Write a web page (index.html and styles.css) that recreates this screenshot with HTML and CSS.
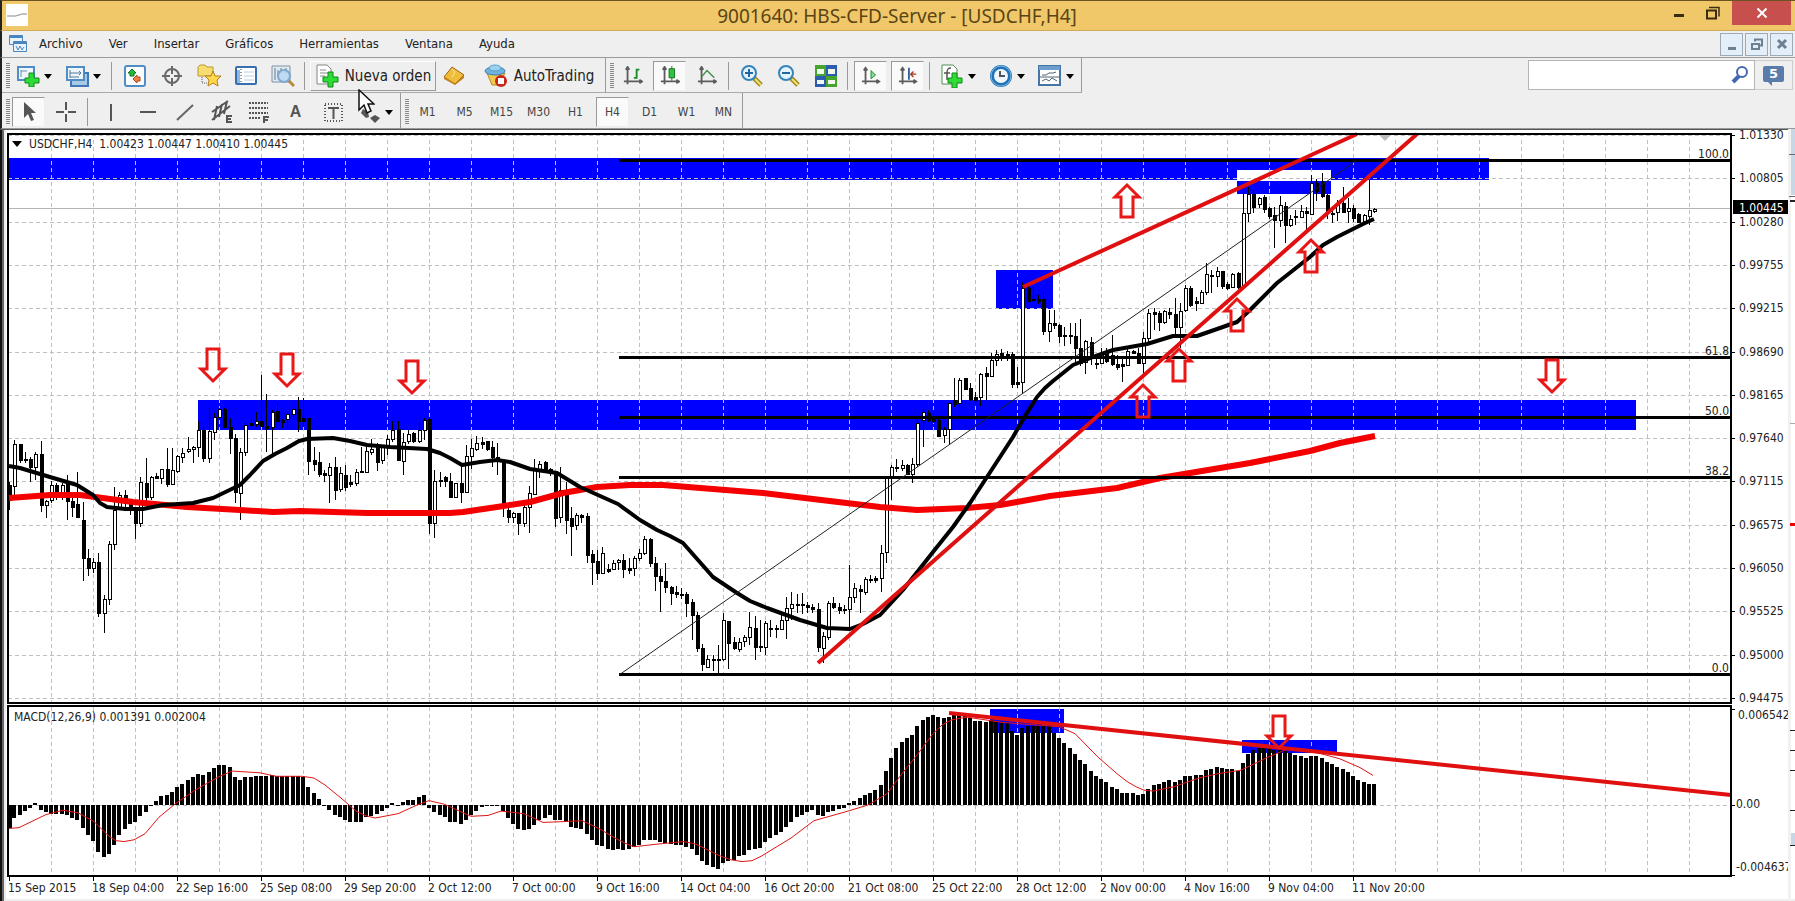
FILE: index.html
```html
<!DOCTYPE html>
<html lang="es">
<head>
<meta charset="utf-8">
<title>9001640: HBS-CFD-Server - [USDCHF,H4]</title>
<link rel="stylesheet" href="styles.css">
</head>
<body>
<header class="titlebar">
  <span class="app-icon"><svg width="22" height="22" viewBox="0 0 22 22"><path d="M1 12h9l2-1 2 0 1-1h6" fill="none" stroke="#888"/></svg></span>
  <h1 class="title">9001640: HBS-CFD-Server - [USDCHF,H4]</h1>
  <div class="window-controls">
    <button class="win-btn" aria-label="Minimizar"><svg width="12" height="14"><path d="M1 8h10v3H1z" fill="#3a2d10"/></svg></button>
    <button class="win-btn" aria-label="Restaurar"><svg width="14" height="14" fill="none" stroke="#3a2d10"><path d="M1 4.5h9v8H1z" stroke-width="2"/><path d="M3 1.5h10v9" stroke-width="1.5"/></svg></button>
    <button class="win-btn close" aria-label="Cerrar"><svg width="12" height="12" stroke="#fff" stroke-width="2"><path d="M1.500 1.500l9 9M10.500 1.500l-9 9"/></svg></button>
  </div>
</header>
<nav class="menubar">
  <svg class="menu-icon" width="20" height="20" viewBox="0 0 20 20" fill="#eaf3fc" stroke="#4a86c0"><path d="M1.500 1.500h13v9h-13z"/><path d="M1.500 3h13" stroke-width="2"/><path d="M5.500 7.500h13v10h-13z"/><path d="M5.500 9h13" stroke-width="2"/><path d="M8 12l2 4 2-4 2 4 2-3" fill="none"/></svg>
  <button class="menu">Archivo</button>
  <button class="menu">Ver</button>
  <button class="menu">Insertar</button>
  <button class="menu">Gráficos</button>
  <button class="menu">Herramientas</button>
  <button class="menu">Ventana</button>
  <button class="menu">Ayuda</button>
  <div class="mdi">
    <button class="mdi-btn" aria-label="Minimizar gráfico"><svg width="16" height="16"><path d="M4 11h8v3H4z" fill="#6c8092"/></svg></button>
    <button class="mdi-btn" aria-label="Restaurar gráfico"><svg width="16" height="16" fill="none" stroke="#6c8092"><path d="M3 8h7v5H3z" stroke-width="2"/><path d="M6 5.500V3.500h7v6h-2" stroke-width="2"/></svg></button>
    <button class="mdi-btn" aria-label="Cerrar gráfico"><svg width="16" height="16" stroke="#6c8092" stroke-width="3"><path d="M4 4l8 8M12 4l-8 8"/></svg></button>
  </div>
</nav>
<div class="bar">
  <div class="tools">
    <span class="grip"></span>
    <button class="tool drop" aria-label="Nuevo gráfico"><svg width="24" height="22" viewBox="0 0 24 22"><path d="M2 2h16v13H2z" fill="#eef6fd" stroke="#4f8dc4" stroke-width="2"/><path d="M5 5v7M5 6h6" stroke="#6c8da8"/><path d="M13 8h5v5h5v5h-5v4h-5v-4H9v-5h4z" fill="#2ddd35" stroke="#12871a"/></svg></button>
    <button class="tool drop" aria-label="Perfiles"><svg width="24" height="22" viewBox="0 0 24 22"><path d="M6 8h17v13H6z" fill="#a8caea" stroke="#3f78b5" stroke-width="2"/><path d="M2 2h17v13H2z" fill="#eef6fd" stroke="#4f8dc4" stroke-width="2"/><path d="M5 5v8M5 8h11M14 6l2 2-2 2M5 12h9" fill="none" stroke="#55799a"/></svg></button>
    <span class="sep"></span>
    <button class="tool" aria-label="Observación de mercado"><svg width="22" height="22" viewBox="0 0 22 22"><rect x="1" y="1" width="20" height="20" rx="2" fill="#fbfdff" stroke="#4f8dc4" stroke-width="2"/><path d="M8 4l4 4h-2v3H6V8H4z" fill="#1fc138" stroke="#11711f"/><path d="M13 18l-4-4 4-4v2h3v4h-3z" fill="#f08045" stroke="#b0461b"/></svg></button>
    <button class="tool" aria-label="Ventana de datos"><svg width="22" height="22" viewBox="0 0 22 22" fill="none" stroke="#696969" stroke-width="2"><circle cx="11" cy="11" r="7"/><path d="M11 1v8M11 13v8M1 11h8M13 11h8"/></svg></button>
    <button class="tool" aria-label="Navegador"><svg width="26" height="24" viewBox="0 0 26 24"><path d="M2 3l2-2h5l2 2h6v9H2z" fill="#f5de6f" stroke="#bd962e"/><path d="M6 13v6h6" fill="none" stroke="#555" stroke-dasharray="1 1"/><path d="M17 7l2 5h6l-4 4 1 6-5-3-5 3 1-6-4-4h6z" fill="#ffd84f" stroke="#b77f1a"/></svg></button>
    <button class="tool" aria-label="Terminal"><svg width="22" height="20" viewBox="0 0 22 20"><rect x="1" y="1" width="20" height="17" rx="1" fill="#fff" stroke="#356fb0" stroke-width="2"/><path d="M2 4h3v13H2z" fill="#8fb8e2"/><path d="M6 3v14" stroke="#333" stroke-dasharray="1 2"/><path d="M9 6h10M9 10h10M9 14h10" stroke="#b7cee2"/></svg></button>
    <button class="tool" aria-label="Probador de estrategias"><svg width="24" height="24" viewBox="0 0 24 24"><path d="M1 2h18v16H1z" fill="#e2e9ef" stroke="#7c93a8"/><path d="M4 4v12M7 6v6M10 4v5M15 4v6" stroke="#60798e"/><path d="M17 16l6 6" stroke="#b58a3c" stroke-width="3"/><circle cx="13" cy="12" r="6" fill="#b9d8f3" fill-opacity=".85" stroke="#7ea8cf" stroke-width="2"/></svg></button>
    <span class="sep"></span>
    <button class="tool order"><svg width="24" height="24" viewBox="0 0 24 24"><path d="M2 1h10l4 4v15H2z" fill="#fff" stroke="#858585"/><path d="M5 6h6M5 9h8M5 12h5" stroke="#8a8a8a"/><path d="M13 8h5v5h5v5h-5v5h-5v-5H8v-5h5z" fill="#2ddd35" stroke="#12871a"/></svg>Nueva orden</button>
    <button class="tool" aria-label="MetaEditor"><svg width="24" height="20" viewBox="0 0 24 20"><path d="M9 1l12 8-9 9L1 11z" fill="#f0bd3a" stroke="#9b6415"/><path d="M1 11l11 7 9-9v3l-9 7-11-6z" fill="#c8811c"/><path d="M9 3l3 3-3 5" fill="none" stroke="#fbe59a"/></svg></button>
    <button class="tool auto"><svg width="24" height="24" viewBox="0 0 24 24"><path d="M3 9l5 12h7l6-12z" fill="#f3c84b" stroke="#b48a28"/><ellipse cx="11" cy="7" rx="10" ry="4" fill="#6fb3df" stroke="#3c80af"/><ellipse cx="11" cy="4" rx="6" ry="3" fill="#9bd0ef" stroke="#5a9cc8"/><circle cx="17" cy="17" r="6" fill="#c9261a"/><path d="M14 14h6v6h-6z" fill="#fff"/></svg>AutoTrading</button>
  </div>
  <div class="tools">
    <span class="grip"></span>
    <button class="tool" aria-label="Gráfico de barras"><svg width="20" height="20" viewBox="0 0 22 22" fill="none"><path d="M5 1v19M1 17h19M3 4l2-3 2 3M18 15l3 2-3 2" stroke="#5c5c5c" stroke-width="2"/><path d="M12 13h3V4h3M15 5v9" stroke="#148b27" stroke-width="2"/></svg></button>
    <button class="tool on" aria-label="Velas japonesas"><svg width="20" height="20" viewBox="0 0 22 22" fill="none"><path d="M5 1v19M1 17h19M3 4l2-3 2 3M18 15l3 2-3 2" stroke="#5c5c5c" stroke-width="2"/><path d="M13 0v16" stroke="#126a1d"/><path d="M10 3h6v10h-6z" fill="#2cc53c" stroke="#126a1d"/></svg></button>
    <button class="tool" aria-label="Gráfico de línea"><svg width="20" height="20" viewBox="0 0 22 22" fill="none"><path d="M5 1v19M1 17h19M3 4l2-3 2 3M18 15l3 2-3 2" stroke="#5c5c5c" stroke-width="2"/><path d="M5 12l6-7 8 8" stroke="#3a9146" stroke-width="1.500"/></svg></button>
    <span class="sep"></span>
    <button class="tool" aria-label="Acercar"><svg width="24" height="24" viewBox="0 0 24 24"><path d="M14 14l7 7" stroke="#a08a1c" stroke-width="5"/><path d="M15 15l6 6" stroke="#efe07c" stroke-width="2"/><circle cx="9" cy="9" r="7" fill="#e3f4fe" stroke="#3583bb" stroke-width="2"/><path d="M5 9h8M9 5v8" stroke="#23679e" stroke-width="2"/></svg></button>
    <button class="tool" aria-label="Alejar"><svg width="24" height="24" viewBox="0 0 24 24"><path d="M14 14l7 7" stroke="#a08a1c" stroke-width="5"/><path d="M15 15l6 6" stroke="#efe07c" stroke-width="2"/><circle cx="9" cy="9" r="7" fill="#e3f4fe" stroke="#3583bb" stroke-width="2"/><path d="M5 9h8" stroke="#23679e" stroke-width="2"/></svg></button>
    <button class="tool" aria-label="Mosaico"><svg width="24" height="22" viewBox="0 0 24 22"><path d="M1 0h11v11H1zM12 11h11v11H12z" fill="#45a52d"/><path d="M12 0h11v11H12zM1 11h11v11H1z" fill="#2c5cae"/><path d="M3 4h7v5H3zM14 4h7v5h-7zM3 15h7v4H3zM14 15h7v4h-7z" fill="#f2f8ee"/></svg></button>
    <span class="sep"></span>
    <button class="tool on" aria-label="Desplazamiento automático"><svg width="20" height="20" viewBox="0 0 22 22" fill="none"><path d="M5 2v18M1 17h19M3 5l2-3 2 3M17 15l3 2-3 2" stroke="#5c5c5c" stroke-width="2"/><path d="M11 5l5 5-5 4z" fill="#8ad796" stroke="#148b27"/></svg></button>
    <button class="tool on" aria-label="Desplazar gráfico"><svg width="20" height="20" viewBox="0 0 22 22" fill="none"><path d="M5 2v18M1 17h19M3 5l2-3 2 3M17 15l3 2-3 2" stroke="#5c5c5c" stroke-width="2"/><path d="M12 2v13" stroke="#315f9c" stroke-width="2"/><path d="M20 9h-5M17 6l-3 3 3 3" stroke="#a5391d" stroke-width="1.500"/></svg></button>
    <span class="sep"></span>
    <button class="tool drop" aria-label="Indicadores"><svg width="24" height="24" viewBox="0 0 24 24"><path d="M2 1h11l4 4v15H2z" fill="#fff" stroke="#4c8f52"/><path d="M11 4c-3 0-4 1-4 5v7M4 9h6" fill="none" stroke="#555" stroke-width="1.500"/><path d="M12 9h5v5h5v5h-5v5h-5v-5H8v-5h4z" fill="#2ddd35" stroke="#12871a"/></svg></button>
    <button class="tool drop" aria-label="Períodos"><svg width="24" height="22" viewBox="0 0 24 22"><circle cx="12" cy="11" r="9" fill="#eef7fe" stroke="#2372b8" stroke-width="4"/><circle cx="12" cy="11" r="10" fill="none" stroke="#77b9e6"/><path d="M11 6v5h5" fill="none" stroke="#555" stroke-width="2"/></svg></button>
    <button class="tool drop" aria-label="Plantillas"><svg width="24" height="22" viewBox="0 0 24 22"><path d="M1 1h21v19H1z" fill="#fff" stroke="#4575a5" stroke-width="2"/><path d="M1 1h21v4H1z" fill="#6d9dce"/><path d="M4 10h4l3-2h4l3-1M4 16l4-2 3 2 3-3 5 3M2 12h19" fill="none" stroke="#4f6576"/></svg></button>
  </div>
  <div class="search">
    <input class="search-box" type="text" aria-label="Buscar">
    <svg class="lens" width="18" height="18" viewBox="0 0 18 18" fill="none"><circle cx="11" cy="6" r="5" stroke="#4468b0" stroke-width="2"/><path d="M8 10l-6 6" stroke="#4468b0" stroke-width="4"/></svg>
    <button class="chat" aria-label="Mensajes"><span class="bubble">5</span></button>
  </div>
</div>
<div class="bar second">
  <div class="tools">
    <span class="grip"></span>
    <button class="tool on" aria-label="Cursor"><svg width="14" height="20" viewBox="0 0 14 20"><path d="M2 0v16l4-4 3 7 3-1-3-7h5z" fill="#555"/></svg></button>
    <button class="tool" aria-label="Cruz"><svg width="22" height="22" stroke="#555" stroke-width="2"><path d="M11 1v8M11 13v8M1 11h8M13 11h8"/></svg></button>
    <span class="sep"></span>
    <button class="tool" aria-label="Línea vertical"><svg width="22" height="22" stroke="#555" stroke-width="2"><path d="M11 3v17"/></svg></button>
    <button class="tool" aria-label="Línea horizontal"><svg width="22" height="22" stroke="#555" stroke-width="2"><path d="M3 11h16"/></svg></button>
    <button class="tool" aria-label="Línea de tendencia"><svg width="22" height="22" stroke="#666" stroke-width="2"><path d="M3 19L19 4"/></svg></button>
    <button class="tool" aria-label="Canal equidistante"><svg width="24" height="24" viewBox="0 0 24 24" stroke="#555" stroke-width="2" fill="none"><path d="M2 12L18 1M2 20L20 6M7 6l-3 14M12 4L9 17M17 1l-3 13"/><path d="M22 16h-5v6h5M17 19h4"/></svg></button>
    <button class="tool" aria-label="Fibonacci"><svg width="24" height="24" viewBox="0 0 24 24" stroke="#555" stroke-width="2" fill="none"><path d="M2 3h19M2 8h19M2 13h19M2 18h12" stroke-dasharray="2 1"/><path d="M17 23v-6h5M17 20h4"/></svg></button>
    <button class="tool glyph">A</button>
    <button class="tool" aria-label="Etiqueta de texto"><svg width="20" height="20" viewBox="0 0 20 20" stroke="#555" fill="none"><path d="M2 2h17v17H2z" stroke-dasharray="1 2" stroke-width="2"/><path d="M5 6h11M10.500 6v11" stroke-width="2"/></svg></button>
    <button class="tool drop" aria-label="Flechas"><svg width="24" height="24" viewBox="0 0 24 24"><path d="M6 9l5 3 1 5-3 1-5-5z" fill="#555"/><path d="M18 15l5 3-5 5-5-5z" fill="#555"/></svg></button>
  </div>
  <div class="tools">
    <span class="grip"></span>
    <button class="tool">M1</button>
    <button class="tool">M5</button>
    <button class="tool">M15</button>
    <button class="tool">M30</button>
    <button class="tool">H1</button>
    <button class="tool on">H4</button>
    <button class="tool">D1</button>
    <button class="tool">W1</button>
    <button class="tool">MN</button>
  </div>
  <svg class="pointer" width="18" height="26" viewBox="0 0 18 26"><path d="M2 1v20l5-5 3 8 4-2-3-7h6z" fill="#fff" stroke="#111" stroke-width="1.500"/></svg>
</div>
<main>
<svg class="chart" viewBox="0 129 1795 772" role="img" aria-label="USDCHF,H4">
  <rect class="paper" x="0" y="129" width="1795" height="772"/>
  <g id="zones">
    <rect x="8" y="158" width="1481" height="22"/>
    <rect class="paper" x="1237" y="170" width="94" height="10"/>
    <rect x="1237" y="181" width="94" height="13"/>
    <rect x="198" y="400" width="1438" height="30"/>
    <rect x="996" y="270" width="57" height="39"/>
    <rect x="990" y="709" width="74" height="24"/>
    <rect x="1242" y="740" width="95" height="13"/>
  </g>
  <g id="grid"></g>
  <path class="price-line" d="M8 208.500H1731"/>
  <g id="bars"></g>
  <path id="signal"/>
  <g id="candles"></g>
  <path class="ma-slow" d="M9 498L50 495 80 495 133 502 187 507 240 510 273 512 300 511 367 513 450 513 463 512 497 507 530 502 563 493 597 487 630 485 663 485 713 489 763 493 813 499 880 507 917 510 967 508 1000 505 1017 502 1050 496 1117 488 1160 478 1250 463 1310 451 1340 443 1375 436"/>
  <path class="ma-fast" d="M9 466L20 468 50 477 77 485 93 495 100 503 107 507 125 509 143 509 163 505 193 503 213 498 240 485 250 475 263 461 275 454 287 448 299 441 307 439 333 438 350 441 367 445 390 447 427 449 440 453 450 458 462 465 480 462 497 460 510 462 530 469 557 473 580 487 618 504 640 520 657 530 670 536 683 543 698 560 713 577 725 585 737 593 750 601 767 608 800 620 827 628 850 629 863 624 880 615 903 590 918 571 933 552 953 527 970 503 987 477 1013 437 1025 416 1037 397 1045 388 1053 381 1073 365 1093 357 1113 350 1147 344 1173 336 1197 336 1220 328 1237 322 1250 310 1277 283 1310 257 1323 245 1337 237 1363 224 1374 219"/>
  <path class="fib" d="M619 160.500H1731M619 357.500H1731M619 417.500H1731M619 477.500H1731M619 674.500H1731"/>
  <path class="fib-diagonal" d="M619 675L1356 161"/>
  <path class="trend" d="M818 663L1417 134M1023 287L1357 134M949 713L1731 795"/>
  <g id="arrows"></g>
  <path class="shift-mark" d="M1378 134h14l-7 7z"/>
  <path class="frame" d="M7.500 703V133.500H1731V703M7 703H1732M7.500 876V706H1731V876M7 876H1732"/>
  <g id="labels">
    <path class="black" d="M12 141h10l-5 6z"/>
    <text x="29" y="148" xml:space="preserve">USDCHF,H4  1.00423 1.00447 1.00410 1.00445</text>
    <text x="14" y="721">MACD(12,26,9) 0.001391 0.002004</text>
    <text x="1738" y="719">0.006542</text>
    <text x="1736" y="808">0.00</text>
    <text x="1736" y="871">-0.004637</text>
    <g text-anchor="end">
      <text x="1729" y="158">100.0</text>
      <text x="1729" y="355">61.8</text>
      <text x="1729" y="415">50.0</text>
      <text x="1729" y="475">38.2</text>
      <text x="1729" y="672">0.0</text>
    </g>
  </g>
  <rect class="black" x="1733" y="200" width="55" height="14"/>
  <text class="price-tag" x="1739" y="212">1.00445</text>
  <g class="edges">
    <path d="M0 129h2v772H0z" fill="#111"/>
    <path d="M2 129h2v772H2z" fill="#666"/>
    <path d="M4 129h2v772H4z" fill="#ececec"/>
    <path d="M0 129h1788v1H0z" fill="#555"/>
    <path d="M4 899h1791v2H4z" fill="#efefef"/>
    <path d="M1788 129h3v772h-3z" fill="#f1f1f1"/>
    <path d="M1791 129h4v66h-4zM1791 833h4v12h-4z" fill="#c8d7e6"/>
    <path d="M1789 154h6v1h-6zM1789 196h6v1h-6z" fill="#667"/>
    <path d="M1790 200h5v2h-5zM1790 730h5v1h-5zM1790 750h5v1h-5zM1790 770h5v1h-5zM1790 810h5v1h-5zM1790 845h5v1h-5z" fill="#222"/>
    <path d="M1790 423h5v1h-5z" fill="#aaa"/>
    <path d="M1790 523h5v3h-5z" fill="#e00"/>
  </g>
</svg>
</main>
<script src="chart.js"></script>
</body>
</html>
```

FILE: styles.css
```css
* { box-sizing: border-box; }
body {
  margin: 0;
  background: #efefef;
  font: 13px "DejaVu Sans Condensed", "DejaVu Sans", "Noto Sans", sans-serif;
  color: #222;
}
button { font: inherit; color: inherit; background: none; border: 0; padding: 0; }
svg { display: block; flex: none; }

.titlebar {
  display: flex;
  align-items: flex-start;
  height: 31px;
  padding: 0 4px;
  background: #f0c869;
  border-top: 1px solid #6b5420;
  border-bottom: 1px solid #d0aa58;
  border-left: 2px solid #222;
}
.app-icon { width: 22px; height: 22px; margin-top: 3px; background: #fff; }
.title {
  flex: 1;
  margin: 0 0 0 104px;
  font: 19px/30px "Noto Sans", "Open Sans", sans-serif;
  color: #5a4415;
  text-align: center;
}
.window-controls { display: flex; }
.win-btn { display: flex; width: 34px; height: 24px; align-items: center; justify-content: center; }
.win-btn.close { width: 59px; margin-left: 2px; background: #c7504f; }

.menubar {
  display: flex;
  align-items: center;
  height: 27px;
  padding-left: 6px;
  border-left: 2px solid #222;
  border-bottom: 1px solid #9a9a9a;
}
.menu-icon { margin-right: 1px; }
.menu { padding: 0 13px; line-height: 26px; }
.menu-icon + .menu { padding-left: 10px; }
.mdi { display: flex; gap: 2px; margin-left: auto; padding-right: 2px; }
.mdi-btn {
  display: flex;
  align-items: center;
  justify-content: center;
  width: 23px;
  height: 23px;
  background: #e3eef9;
  border: 1px solid #9aabba;
}

.bar { display: flex; height: 35px; border-left: 2px solid #222; position: relative; }
.bar.second { height: 36px; font-size: 12px; color: #444; border-bottom: 1px solid #999; }
.tools {
  display: flex;
  align-items: center;
  padding: 3px 0 1px 4px;
  border-right: 1px solid #999;
  border-bottom: 1px solid #aaa;
}
.second .tools { border-bottom: 0; padding-top: 4px; }
.grip {
  width: 4px;
  height: 26px;
  background: repeating-linear-gradient(#888 0 1px, #efefef 1px 2px);
}
.sep { width: 1px; height: 28px; margin: 0 4px 0 3px; background: #999; }
.tool {
  display: flex;
  align-items: center;
  justify-content: center;
  width: 37px;
  height: 30px;
  white-space: nowrap;
}
.tool.on {
  width: 33px;
  margin: 0 2px;
  background: #fafafa;
  border: 1px solid #eee;
  border-top-color: #999;
  border-left-color: #999;
}
.tool.drop { width: 49px; justify-content: flex-start; gap: 4px; padding-left: 6px; }
.tool.drop::after {
  content: "";
  border: 4px solid transparent;
  border-top: 5px solid #000;
  border-bottom: 0;
}
.order {
  width: 126px;
  margin-left: 1px;
  gap: 6px;
  font-size: 15px;
  border: 1px solid #fff;
  border-right-color: #999;
  border-bottom-color: #999;
}
.auto { width: 132px; gap: 6px; font-size: 15px; }
.glyph { font: bold 16px "Liberation Sans", sans-serif; color: #555; }

.search { position: relative; display: flex; margin: 2px 2px 3px auto; width: 265px; }
.search-box { flex: 1; min-width: 0; border: 1px solid #b5b5b5; background: #fff; padding: 0 28px 0 6px; }
.lens { position: absolute; right: 44px; top: 6px; }
.chat {
  display: flex;
  align-items: center;
  justify-content: center;
  width: 38px;
  border: 1px solid #ccc;
  border-left: 0;
}
.bubble {
  position: relative;
  width: 21px;
  height: 16px;
  margin-bottom: 3px;
  border-radius: 2px;
  background: #5b7bab;
  color: #fff;
  font: bold 13px/16px "DejaVu Sans", sans-serif;
  text-align: center;
}
.bubble::after {
  content: "";
  position: absolute;
  left: 5px;
  top: 16px;
  border-top: 4px solid #5b7bab;
  border-left: 4px solid transparent;
}
.pointer { position: absolute; left: 355px; top: -4px; }

.chart { width: 100%; height: auto; font-size: 12px; }
.chart text { fill: #222; }
.paper { fill: #fff; }
.black { fill: #000; }
#zones rect { fill: #00f; }
#zones .paper { fill: #fff; }
#grid path { fill: none; stroke: #c0c0c0; stroke-dasharray: 4 3; shape-rendering: crispEdges; }
#grid .tick { stroke: #000; stroke-dasharray: none; }
.price-line { stroke: #b4b4b4; }
#bars { fill: #000; shape-rendering: crispEdges; }
#signal { fill: none; stroke: #e01515; stroke-linejoin: round; }
#candles { shape-rendering: crispEdges; }
#candles path { stroke: #000; }
#candles .up { fill: #fff; }
#candles .down { fill: #000; }
.ma-slow { fill: none; stroke: #f40000; stroke-width: 6; stroke-linejoin: round; }
.ma-fast { fill: none; stroke: #000; stroke-width: 4; stroke-linejoin: round; }
.fib { stroke: #000; stroke-width: 3; shape-rendering: crispEdges; }
.fib-diagonal { stroke: #222; }
.trend { fill: none; stroke: #e01010; stroke-width: 4; }
#arrows path { fill: none; stroke: #e81818; stroke-width: 3; }
.shift-mark { fill: #bbb; }
.frame { fill: none; stroke: #000; stroke-width: 2; shape-rendering: crispEdges; }
.chart .price-tag { fill: #fff; }
```

FILE: chart.js
```js
const NS = "http://www.w3.org/2000/svg";
const BAR_STEP = 5.25;
const FIRST_X = 9;
const barX = i => FIRST_X + i * BAR_STEP;

function add(parentId, name, attrs, text) {
  const el = document.createElementNS(NS, name);
  for (const key in attrs) el.setAttribute(key, attrs[key]);
  if (text) el.textContent = text;
  document.getElementById(parentId).appendChild(el);
}

// Each candle: high, body top, body bottom, low; a fifth value marks a rising one.
const candles = [
[482,485,500,510],[440,444,486,495,1],[444,444,460,463],[452,459,460,463],[457,459,467,482],[452,454,467,480,1],[441,454,505,512],[500,501,505,518,1],[481,485,500,503,1],[483,485,492,500],
[483,485,492,500,1],[475,483,501,520],[497,501,507,517],[472,504,517,518],[502,520,558,581],[549,558,568,576],[558,562,568,573,1],[553,562,613,617],[595,599,613,633,1],[541,544,599,605,1],
[487,510,544,550,1],[492,495,507,508,1],[490,495,503,511],[502,503,508,515],[507,508,523,539],[477,482,523,527,1],[458,483,497,502],[476,477,497,500,1],[473,476,478,479],[469,469,478,484,1],
[448,469,484,487],[448,470,484,484,1],[455,456,471,473,1],[448,453,457,463,1],[437,449,451,453,1],[446,447,449,463,1],[421,430,447,457,1],[426,430,458,462],[408,431,458,463,1],[413,417,432,440,1],
[408,409,417,420,1],[408,409,427,428],[418,427,438,454],[434,438,492,503],[448,452,493,520,1],[423,425,452,456,1],[418,423,425,427],[412,421,424,427,1],[375,421,426,427],[394,426,428,452],
[410,412,427,455,1],[403,411,421,423],[419,420,422,428],[412,414,419,428,1],[408,409,414,417,1],[397,409,421,432],[398,418,421,427],[418,418,461,475],[447,460,464,471],[452,462,474,477],
[470,473,475,482],[463,467,475,503,1],[457,467,490,500],[467,473,489,492,1],[465,475,487,491],[475,482,484,487],[469,472,483,486,1],[447,471,472,473],[447,451,472,473,1],[439,449,452,455,1],
[443,447,462,471],[445,447,460,464,1],[435,439,447,455,1],[421,430,439,442,1],[421,429,460,461],[433,442,461,475,1],[430,434,441,444,1],[432,433,441,443],[423,430,441,443,1],[418,420,430,440,1],
[417,419,523,534],[470,481,523,538,1],[472,480,481,487],[476,477,481,487],[473,481,497,497],[483,483,497,497,1],[467,483,492,503],[445,456,492,492,1],[439,448,456,469,1],[436,443,449,451,1],
[437,442,444,449],[441,441,449,451],[441,447,457,467],[443,457,460,475],[460,460,507,517],[507,510,517,523],[512,513,517,523,1],[513,513,523,535],[503,507,523,527,1],[486,493,507,533,1],
[459,468,494,495,1],[461,464,469,478,1],[461,462,470,470],[468,469,473,476],[473,473,518,527],[467,490,517,523,1],[482,495,520,534],[507,518,526,556],[513,515,525,530,1],[514,515,517,523],
[513,516,555,563],[550,554,562,585],[550,561,573,580],[547,553,573,574,1],[564,569,571,573],[560,563,569,570,1],[559,560,562,570,1],[554,560,569,578],[558,568,570,574],[556,558,568,576,1],
[549,553,558,561,1],[536,539,553,555,1],[538,539,563,567],[557,563,576,591],[569,576,581,612],[563,581,587,593],[586,587,593,605],[586,592,594,598],[588,594,595,599],[592,594,603,617],
[599,602,615,640],[612,615,648,652],[644,648,664,671],[655,659,667,668,1],[655,659,660,671],[645,659,660,673],[613,620,659,661,1],[621,621,643,669],[637,642,648,650],[638,642,649,652,1],
[635,637,641,647,1],[612,627,637,645,1],[616,628,647,660],[620,646,647,652],[621,623,647,655,1],[620,628,629,637],[625,628,629,638],[615,620,629,630,1],[597,608,620,639,1],[592,604,608,620,1],
[594,604,605,613],[593,604,605,614],[602,605,607,613],[604,607,609,613],[603,609,647,652],[632,636,648,663,1],[601,603,637,640,1],[597,603,607,609],[603,607,610,614],[605,609,610,614],
[565,597,609,630,1],[583,588,597,603,1],[585,589,591,613],[577,579,592,595,1],[575,579,580,583],[576,578,580,583],[545,553,578,592,1],[476,477,552,563,1],[465,467,477,500,1],[459,467,468,472],
[460,465,468,471,1],[464,465,474,475],[458,464,474,483,1],[418,423,464,467,1],[409,412,420,447,1],[410,413,420,422],[413,419,421,423],[417,420,436,437],[427,429,435,443,1],[403,403,429,445,1],
[378,400,404,407],[378,380,403,407,1],[378,378,389,390],[383,388,399,401],[392,397,400,404],[373,374,397,406,1],[367,373,376,400],[353,360,376,377,1],[350,354,360,366,1],[349,353,356,361],
[351,354,356,361],[352,354,384,388],[367,382,384,388],[282,288,382,394,1],[285,288,301,301],[287,299,300,302],[295,299,301,304],[292,299,331,335],[310,323,331,342,1],[310,323,325,329],
[324,325,336,343],[327,335,336,346],[323,335,336,344],[323,336,348,363],[319,348,363,366],[340,341,362,374,1],[337,342,357,365],[357,363,364,369],[348,353,363,364,1],[348,353,361,363],
[335,355,364,366],[355,364,367,370],[359,364,366,382],[348,351,365,366,1],[350,351,353,354],[348,353,363,363],[332,338,363,373,1],[309,313,338,342,1],[308,312,314,330],[311,313,322,331],
[310,311,322,324,1],[308,312,314,319],[298,314,327,335],[303,311,327,348,1],[285,288,310,312,1],[286,288,305,307],[297,301,303,311],[290,292,303,304,1],[263,274,292,295,1],[270,275,276,293],
[267,271,276,287,1],[271,271,286,289],[282,284,288,290],[273,274,287,288,1],[272,273,287,289],[193,213,285,287,1],[187,194,213,222,1],[190,194,207,213],[197,198,204,208,1],[195,197,209,213],
[207,208,216,219],[207,215,220,248],[196,205,220,227,1],[202,206,225,243],[215,219,225,227,1],[210,216,217,225],[205,211,217,217,1],[207,211,213,230],[175,183,214,215,1],[179,183,191,201],
[173,182,196,198],[194,195,212,219],[208,213,214,223],[200,203,212,221,1],[187,203,212,213],[198,208,211,223,1],[205,208,218,222],[213,214,222,222],[214,215,221,222,1],[180,210,216,225,1],
[208,209,211,213,1]
];

const macd = [
-27,-15,-11,-7,-4,2,-6,-8,-10,-10,-10,-11,-15,-17,-26,-35,-41,-54,-60,-56,-46,-35,-28,-22,-20,-13,-8,-1,5,10,
12,15,21,24,29,32,36,35,38,42,46,46,44,32,29,32,32,33,33,33,35,33,33,33,33,33,32,21,14,7,
-1,-6,-11,-14,-17,-19,-19,-19,-14,-13,-10,-7,-4,2,-1,3,6,6,9,12,-4,-8,-11,-14,-19,-19,-22,-17,-11,-7,
-2,-1,-1,-1,-7,-15,-22,-28,-29,-28,-23,-17,-15,-11,-17,-17,-20,-25,-26,-28,-33,-40,-46,
-47,-50,-52,-51,-52,-50,-48,-46,-40,-40,-40,-42,-44,-45,-46,-46,-48,-50,-57,-64,-69,-71,-73,-67,-64,-63,-59,-57,
-52,-51,-49,-43,-38,-35,-31,-25,-19,-14,-11,-8,-6,-11,-13,-8,-7,-5,-3,2,5,8,11,14,17,23,39,54,65,
72,77,80,91,98,101,103,101,100,101,103,103,102,100,97,97,95,98,97,95,94,85,80,88,91,91,91,91,91,83,77,
71,66,59,52,47,39,33,30,26,21,18,14,14,14,11,13,18,23,24,27,29,27,29,33,33,35,
35,40,41,44,42,41,41,39,48,59,63,65,65,65,63,63,62,60,58,56,54,56,56,54,50,47,44,41,38,33,29,27,24,24
];

const signal = [
[9,-27],[19,-26],[46,-11],[63,-6],[78,-9],[94,-19],[109,-36],[116,-41],[124,-42],[134,-40],[145,-33],[159,-14],[176,2],[195,17],[218,32],[232,39],
[260,37],[276,33],[302,33],[314,31],[325,23],[341,8],[356,-7],[365,-12],[375,-15],[398,-10],[417,0],[429,5],[444,1],[471,-13],[488,-12],[501,-7],
[524,-10],[543,-20],[566,-19],[582,-18],[599,-27],[615,-38],[625,-44],[634,-48],[657,-45],[684,-42],[696,-45],[719,-58],[731,-63],[742,-65],[752,-64],[761,-59],[791,-38],
[814,-18],[845,-8],[868,0],[887,13],[902,36],[918,59],[933,82],[942,92],[952,98],[967,101],[1002,95],[1059,90],[1075,82],[1098,55],[1117,36],
[1127,27],[1136,21],[1144,17],[1153,16],[1174,21],[1199,31],[1218,36],[1241,40],[1268,55],[1287,64],[1305,63],[1321,59],[1340,53],[1360,43],[1373,34]
];

const prices = ["1.01330","1.00805","1.00280","0.99755","0.99215","0.98690","0.98165","0.97640","0.97115","0.96575","0.96050","0.95525","0.95000","0.94475"];
const dates = ["15 Sep 2015","18 Sep 04:00","22 Sep 16:00","25 Sep 08:00","29 Sep 20:00","2 Oct 12:00","7 Oct 00:00","9 Oct 16:00","14 Oct 04:00","16 Oct 20:00","21 Oct 08:00","25 Oct 22:00","28 Oct 12:00","2 Nov 00:00","4 Nov 16:00","9 Nov 04:00","11 Nov 20:00"];

const ZERO_Y = 805;
const macdY = v => ZERO_Y - v * 0.87;

prices.forEach((price, k) => {
  const y = Math.floor(135.5 + k * 43.3) + 0.5;
  add("grid", "path", { d: `M8 ${y}H1731` });
  add("grid", "path", { class: "tick", d: `M1731 ${y}h4` });
  add("labels", "text", { x: 1739, y: y + 3.5 }, price);
});
for (let x = 51.5; x < 1731; x += 42) {
  add("grid", "path", { d: `M${x} 140V702M${x} 707V875` });
}
add("grid", "path", { d: `M8 ${ZERO_Y}.5H1731` });
add("grid", "path", { class: "tick", d: `M1731 ${ZERO_Y}.5h4M1731 709.5h4M1731 875.5h4` });
dates.forEach((date, k) => {
  const x = FIRST_X + k * 84;
  add("grid", "path", { class: "tick", d: `M${x}.5 876v5` });
  add("labels", "text", { x: x - 1, y: 892 }, date);
});

macd.forEach((v, i) => {
  const y = macdY(v);
  const x = Math.round(barX(i)) - 2;
  add("bars", "rect", { x: Math.max(x, 8), y: Math.min(y, ZERO_Y), width: 4, height: Math.abs(y - ZERO_Y) });
});
document.getElementById("signal").setAttribute("d", "M" + signal.map(([x, v]) => `${x} ${macdY(v)}`).join("L"));

candles.forEach(([high, top, bottom, low, up], i) => {
  const x = Math.round(barX(i)) + 0.5;
  const h = Math.max(bottom - top, 1);
  add("candles", "path", { d: `M${x} ${high}V${low}` });
  add("candles", "path", { class: up ? "up" : "down", d: `M${x - 1} ${top}.5h3v${h}h-3z` });
});

// Arrows drawn from their tip.
[[213,381],[287,386],[412,393],[1552,392],[1279,748]].forEach(([x, y]) =>
  add("arrows", "path", { d: `M${x} ${y}l-12 -12h6v-20h12v20h6z` }));
[[1143,385],[1179,349],[1237,299],[1311,240],[1127,185]].forEach(([x, y]) =>
  add("arrows", "path", { d: `M${x} ${y}l-12 12h6v20h12v-20h6z` }));
```
